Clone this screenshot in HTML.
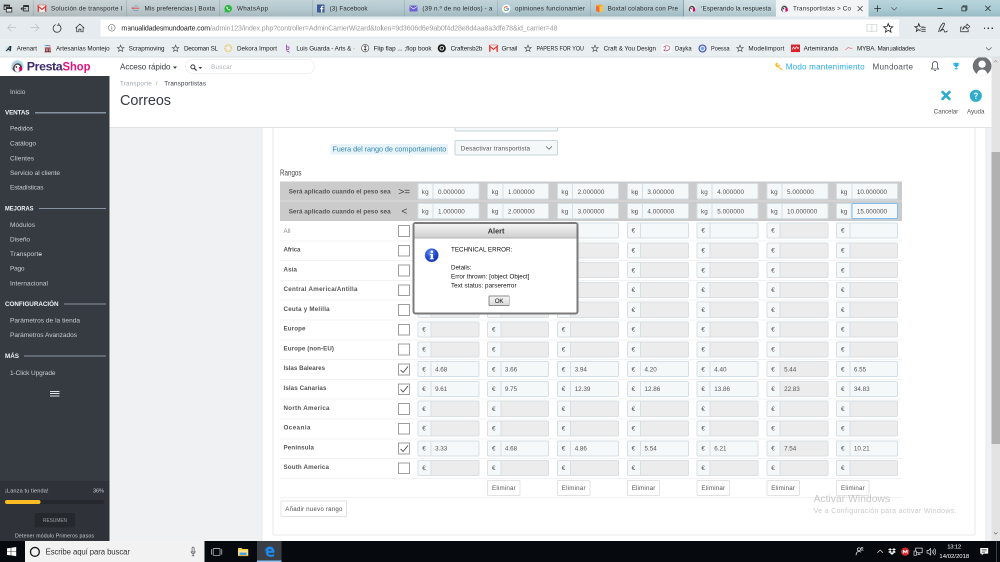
<!DOCTYPE html>
<html><head><meta charset="utf-8"><title>Transportistas</title>
<style>

.t{position:absolute;white-space:nowrap;font-family:"Liberation Sans",sans-serif;}
.a{position:absolute;}
svg{position:absolute;overflow:visible;}
.ig{position:absolute;height:32.2px;width:124px;box-sizing:border-box;border:2px solid #d4e0e5;border-radius:3.2px;background:#f5f8f9;}
.ig i{position:absolute;left:24.2px;top:0;bottom:0;width:2px;background:#d4e0e5;}
.ig.d{border-color:#d9dfe2}
.ig.d b{position:absolute;left:26.2px;top:0;bottom:0;right:0;background:#ececec;}
.ig.k i{left:28.2px}
.cb{position:absolute;left:796.4px;width:23.6px;height:23.6px;box-sizing:border-box;border:2px solid #9e9e9e;background:#fff;}
.rl{position:absolute;left:560px;width:1244px;height:2px;background:#f0f2f3;}
.btn{position:absolute;box-sizing:border-box;border:2px solid #e2e2e2;border-radius:3.2px;background:#fff;}
html,body{margin:0;padding:0;}
body{width:1000px;height:562px;overflow:hidden;position:relative;background:#eff1f2;font-family:"Liberation Sans",sans-serif;}
#w{position:absolute;left:0;top:0;width:2000px;height:1124px;transform:scale(0.5);transform-origin:0 0;will-change:transform;overflow:hidden;background:#eff1f2;}
</style></head>
<body>
<div id="w">
<div class="a" style="left:522.6px;top:240px;width:1450px;height:850px;background:#fff;border:2px solid #e6e9eb;box-sizing:border-box;"></div>
<div class="a" style="left:544.6px;top:240px;width:1406.4px;height:831px;background:#fff;border:2px solid #e6e9eb;box-sizing:border-box;border-radius:0 0 4px 4px;"></div>
<div class="a" style="left:909px;top:236px;width:207px;height:27px;border:2px solid #c5d5db;border-radius:3.2px;background:#f5f8f9;box-sizing:border-box;"></div>
<div class="a" style="left:909px;top:280px;width:207px;height:31.2px;border:2px solid #c5d5db;border-radius:3.2px;background:#f5f8f9;box-sizing:border-box;"></div>
<svg style="left:1091px;top:292px" width="14" height="8" viewBox="0 0 7 4"><path d="M0.5 0.4 L3.5 3.3 L6.5 0.4" fill="none" stroke="#555" stroke-width="0.7"/></svg>
<div class="a" style="left:849.2px;top:253.6px;width:2px;height:2.8px;background:#9aa;"></div>
<div class="a" style="left:661px;top:288px;width:235px;height:21px;background:#e8f3f9;border-radius:3px;"></div>
<div class="a" style="left:560px;top:363.4px;width:1244px;height:78.4px;background:#cbcbcb;"></div>
<div class="a" style="left:560px;top:401px;width:1244px;height:2px;background:#dadada;"></div>
<div class="ig k" style="left:834.8px;top:366.4px"><i></i></div>
<div class="ig k" style="left:974.4px;top:366.4px"><i></i></div>
<div class="ig k" style="left:1114px;top:366.4px"><i></i></div>
<div class="ig k" style="left:1253.6px;top:366.4px"><i></i></div>
<div class="ig k" style="left:1393.2px;top:366.4px"><i></i></div>
<div class="ig k" style="left:1532.8px;top:366.4px"><i></i></div>
<div class="ig k" style="left:1672.4px;top:366.4px"><i></i></div>
<div class="ig k" style="left:834.8px;top:405.6px"><i></i></div>
<div class="ig k" style="left:974.4px;top:405.6px"><i></i></div>
<div class="ig k" style="left:1114px;top:405.6px"><i></i></div>
<div class="ig k" style="left:1253.6px;top:405.6px"><i></i></div>
<div class="ig k" style="left:1393.2px;top:405.6px"><i></i></div>
<div class="ig k" style="left:1532.8px;top:405.6px"><i></i></div>
<div class="ig k" style="left:1672.4px;top:405.6px"><i></i><u style="position:absolute;left:28.2px;top:-2px;right:-2px;bottom:-2px;border:2px solid #86bbe8;border-radius:3.2px;box-shadow:0 0 4px #a9d3f3;"></u></div>
<div class="rl" style="top:480.72px"></div>
<div class="ig" style="left:834.8px;top:445.14px"><b></b><i></i></div>
<div class="ig" style="left:974.4px;top:445.14px"><b></b><i></i></div>
<div class="ig" style="left:1114px;top:445.14px"><b></b><i></i></div>
<div class="ig" style="left:1253.6px;top:445.14px"><b></b><i></i></div>
<div class="ig" style="left:1393.2px;top:445.14px"><b></b><i></i></div>
<div class="ig d" style="left:1532.8px;top:445.14px"><b></b><i></i></div>
<div class="ig" style="left:1672.4px;top:445.14px"><b></b><i></i></div>
<div class="cb" style="top:449.94px"></div>
<div class="rl" style="top:520.3px"></div>
<div class="ig d" style="left:834.8px;top:484.72px"><b></b><i></i></div>
<div class="ig d" style="left:974.4px;top:484.72px"><b></b><i></i></div>
<div class="ig d" style="left:1114px;top:484.72px"><b></b><i></i></div>
<div class="ig d" style="left:1253.6px;top:484.72px"><b></b><i></i></div>
<div class="ig d" style="left:1393.2px;top:484.72px"><b></b><i></i></div>
<div class="ig d" style="left:1532.8px;top:484.72px"><b></b><i></i></div>
<div class="ig d" style="left:1672.4px;top:484.72px"><b></b><i></i></div>
<div class="cb" style="top:489.52px"></div>
<div class="rl" style="top:559.88px"></div>
<div class="ig d" style="left:834.8px;top:524.3px"><b></b><i></i></div>
<div class="ig d" style="left:974.4px;top:524.3px"><b></b><i></i></div>
<div class="ig d" style="left:1114px;top:524.3px"><b></b><i></i></div>
<div class="ig d" style="left:1253.6px;top:524.3px"><b></b><i></i></div>
<div class="ig d" style="left:1393.2px;top:524.3px"><b></b><i></i></div>
<div class="ig d" style="left:1532.8px;top:524.3px"><b></b><i></i></div>
<div class="ig d" style="left:1672.4px;top:524.3px"><b></b><i></i></div>
<div class="cb" style="top:529.1px"></div>
<div class="rl" style="top:599.46px"></div>
<div class="ig d" style="left:834.8px;top:563.88px"><b></b><i></i></div>
<div class="ig d" style="left:974.4px;top:563.88px"><b></b><i></i></div>
<div class="ig d" style="left:1114px;top:563.88px"><b></b><i></i></div>
<div class="ig d" style="left:1253.6px;top:563.88px"><b></b><i></i></div>
<div class="ig d" style="left:1393.2px;top:563.88px"><b></b><i></i></div>
<div class="ig d" style="left:1532.8px;top:563.88px"><b></b><i></i></div>
<div class="ig d" style="left:1672.4px;top:563.88px"><b></b><i></i></div>
<div class="cb" style="top:568.68px"></div>
<div class="rl" style="top:639.04px"></div>
<div class="ig d" style="left:834.8px;top:603.46px"><b></b><i></i></div>
<div class="ig d" style="left:974.4px;top:603.46px"><b></b><i></i></div>
<div class="ig d" style="left:1114px;top:603.46px"><b></b><i></i></div>
<div class="ig d" style="left:1253.6px;top:603.46px"><b></b><i></i></div>
<div class="ig d" style="left:1393.2px;top:603.46px"><b></b><i></i></div>
<div class="ig d" style="left:1532.8px;top:603.46px"><b></b><i></i></div>
<div class="ig d" style="left:1672.4px;top:603.46px"><b></b><i></i></div>
<div class="cb" style="top:608.26px"></div>
<div class="rl" style="top:678.62px"></div>
<div class="ig d" style="left:834.8px;top:643.04px"><b></b><i></i></div>
<div class="ig d" style="left:974.4px;top:643.04px"><b></b><i></i></div>
<div class="ig d" style="left:1114px;top:643.04px"><b></b><i></i></div>
<div class="ig d" style="left:1253.6px;top:643.04px"><b></b><i></i></div>
<div class="ig d" style="left:1393.2px;top:643.04px"><b></b><i></i></div>
<div class="ig d" style="left:1532.8px;top:643.04px"><b></b><i></i></div>
<div class="ig d" style="left:1672.4px;top:643.04px"><b></b><i></i></div>
<div class="cb" style="top:647.84px"></div>
<div class="rl" style="top:718.2px"></div>
<div class="ig d" style="left:834.8px;top:682.62px"><b></b><i></i></div>
<div class="ig d" style="left:974.4px;top:682.62px"><b></b><i></i></div>
<div class="ig d" style="left:1114px;top:682.62px"><b></b><i></i></div>
<div class="ig d" style="left:1253.6px;top:682.62px"><b></b><i></i></div>
<div class="ig d" style="left:1393.2px;top:682.62px"><b></b><i></i></div>
<div class="ig d" style="left:1532.8px;top:682.62px"><b></b><i></i></div>
<div class="ig d" style="left:1672.4px;top:682.62px"><b></b><i></i></div>
<div class="cb" style="top:687.42px"></div>
<div class="rl" style="top:757.78px"></div>
<div class="ig" style="left:834.8px;top:722.2px"><b></b><i></i></div>
<div class="ig" style="left:974.4px;top:722.2px"><b></b><i></i></div>
<div class="ig" style="left:1114px;top:722.2px"><b></b><i></i></div>
<div class="ig" style="left:1253.6px;top:722.2px"><b></b><i></i></div>
<div class="ig" style="left:1393.2px;top:722.2px"><b></b><i></i></div>
<div class="ig d" style="left:1532.8px;top:722.2px"><b></b><i></i></div>
<div class="ig" style="left:1672.4px;top:722.2px"><b></b><i></i></div>
<div class="cb" style="top:727px"><svg style="left:1.2px;top:1.6px" width="17" height="16" viewBox="0 0 8.5 8"><path d="M0.6 4.4 L3.1 7 L8 1" fill="none" stroke="#444" stroke-width="0.9"/></svg></div>
<div class="rl" style="top:797.36px"></div>
<div class="ig" style="left:834.8px;top:761.78px"><b></b><i></i></div>
<div class="ig" style="left:974.4px;top:761.78px"><b></b><i></i></div>
<div class="ig" style="left:1114px;top:761.78px"><b></b><i></i></div>
<div class="ig" style="left:1253.6px;top:761.78px"><b></b><i></i></div>
<div class="ig" style="left:1393.2px;top:761.78px"><b></b><i></i></div>
<div class="ig d" style="left:1532.8px;top:761.78px"><b></b><i></i></div>
<div class="ig" style="left:1672.4px;top:761.78px"><b></b><i></i></div>
<div class="cb" style="top:766.58px"><svg style="left:1.2px;top:1.6px" width="17" height="16" viewBox="0 0 8.5 8"><path d="M0.6 4.4 L3.1 7 L8 1" fill="none" stroke="#444" stroke-width="0.9"/></svg></div>
<div class="rl" style="top:836.94px"></div>
<div class="ig d" style="left:834.8px;top:801.36px"><b></b><i></i></div>
<div class="ig d" style="left:974.4px;top:801.36px"><b></b><i></i></div>
<div class="ig d" style="left:1114px;top:801.36px"><b></b><i></i></div>
<div class="ig d" style="left:1253.6px;top:801.36px"><b></b><i></i></div>
<div class="ig d" style="left:1393.2px;top:801.36px"><b></b><i></i></div>
<div class="ig d" style="left:1532.8px;top:801.36px"><b></b><i></i></div>
<div class="ig d" style="left:1672.4px;top:801.36px"><b></b><i></i></div>
<div class="cb" style="top:806.16px"></div>
<div class="rl" style="top:876.52px"></div>
<div class="ig d" style="left:834.8px;top:840.94px"><b></b><i></i></div>
<div class="ig d" style="left:974.4px;top:840.94px"><b></b><i></i></div>
<div class="ig d" style="left:1114px;top:840.94px"><b></b><i></i></div>
<div class="ig d" style="left:1253.6px;top:840.94px"><b></b><i></i></div>
<div class="ig d" style="left:1393.2px;top:840.94px"><b></b><i></i></div>
<div class="ig d" style="left:1532.8px;top:840.94px"><b></b><i></i></div>
<div class="ig d" style="left:1672.4px;top:840.94px"><b></b><i></i></div>
<div class="cb" style="top:845.74px"></div>
<div class="rl" style="top:916.1px"></div>
<div class="ig" style="left:834.8px;top:880.52px"><b></b><i></i></div>
<div class="ig" style="left:974.4px;top:880.52px"><b></b><i></i></div>
<div class="ig" style="left:1114px;top:880.52px"><b></b><i></i></div>
<div class="ig" style="left:1253.6px;top:880.52px"><b></b><i></i></div>
<div class="ig" style="left:1393.2px;top:880.52px"><b></b><i></i></div>
<div class="ig d" style="left:1532.8px;top:880.52px"><b></b><i></i></div>
<div class="ig" style="left:1672.4px;top:880.52px"><b></b><i></i></div>
<div class="cb" style="top:885.32px"><svg style="left:1.2px;top:1.6px" width="17" height="16" viewBox="0 0 8.5 8"><path d="M0.6 4.4 L3.1 7 L8 1" fill="none" stroke="#444" stroke-width="0.9"/></svg></div>
<div class="rl" style="top:955.68px"></div>
<div class="ig d" style="left:834.8px;top:920.1px"><b></b><i></i></div>
<div class="ig d" style="left:974.4px;top:920.1px"><b></b><i></i></div>
<div class="ig d" style="left:1114px;top:920.1px"><b></b><i></i></div>
<div class="ig d" style="left:1253.6px;top:920.1px"><b></b><i></i></div>
<div class="ig d" style="left:1393.2px;top:920.1px"><b></b><i></i></div>
<div class="ig d" style="left:1532.8px;top:920.1px"><b></b><i></i></div>
<div class="ig d" style="left:1672.4px;top:920.1px"><b></b><i></i></div>
<div class="cb" style="top:924.9px"></div>
<div class="rl" style="top:994.4px"></div>
<div class="btn" style="left:974.4px;top:960px;width:66.8px;height:32px"></div>
<div class="btn" style="left:1114px;top:960px;width:66.8px;height:32px"></div>
<div class="btn" style="left:1253.6px;top:960px;width:66.8px;height:32px"></div>
<div class="btn" style="left:1393.2px;top:960px;width:66.8px;height:32px"></div>
<div class="btn" style="left:1532.8px;top:960px;width:66.8px;height:32px"></div>
<div class="btn" style="left:1672.4px;top:960px;width:66.8px;height:32px"></div>
<div class="btn" style="left:560.8px;top:1001px;width:132.8px;height:32.6px"></div>
<span class="t" style="left:664.8px;top:288.52px;font-size:14.6px;line-height:18.98px;color:#3586ae;letter-spacing:-0.13px;">Fuera del rango de comportamiento</span>
<span class="t" style="left:921.6px;top:288.9px;font-size:12.6px;line-height:16.38px;color:#555;letter-spacing:0.27px;">Desactivar transportista</span>
<span class="t" style="left:560px;top:336.16px;font-size:16px;line-height:20.8px;color:#444;transform:scaleX(0.7796);transform-origin:0 50%;">Rangos</span>
<span class="t" style="left:577.4px;top:375.3px;font-size:12.6px;line-height:16.38px;color:#555;font-weight:700;letter-spacing:0.07px;">Será aplicado cuando el peso sea</span>
<span class="t" style="left:577.4px;top:414.9px;font-size:12.6px;line-height:16.38px;color:#555;font-weight:700;letter-spacing:0.07px;">Será aplicado cuando el peso sea</span>
<span class="t" style="left:796.4px;top:368.84px;font-size:20.8px;line-height:27.04px;color:#444;letter-spacing:-0.3px;">&gt;=</span>
<span class="t" style="left:802.8px;top:408.44px;font-size:20.8px;line-height:27.04px;color:#444;">&lt;</span>
<span class="t" style="left:843.6px;top:376.1px;font-size:12.6px;line-height:16.38px;color:#555;letter-spacing:0.29px;">kg</span>
<span class="t" style="left:876px;top:375.5px;font-size:12.6px;line-height:16.38px;color:#555;letter-spacing:0.15px;">0.000000</span>
<span class="t" style="left:843.6px;top:415.1px;font-size:12.6px;line-height:16.38px;color:#555;letter-spacing:0.29px;">kg</span>
<span class="t" style="left:876px;top:414.5px;font-size:12.6px;line-height:16.38px;color:#555;letter-spacing:0.15px;">1.000000</span>
<span class="t" style="left:983.2px;top:376.1px;font-size:12.6px;line-height:16.38px;color:#555;letter-spacing:0.29px;">kg</span>
<span class="t" style="left:1015.6px;top:375.5px;font-size:12.6px;line-height:16.38px;color:#555;letter-spacing:0.15px;">1.000000</span>
<span class="t" style="left:983.2px;top:415.1px;font-size:12.6px;line-height:16.38px;color:#555;letter-spacing:0.29px;">kg</span>
<span class="t" style="left:1015.6px;top:414.5px;font-size:12.6px;line-height:16.38px;color:#555;letter-spacing:0.15px;">2.000000</span>
<span class="t" style="left:1122.8px;top:376.1px;font-size:12.6px;line-height:16.38px;color:#555;letter-spacing:0.29px;">kg</span>
<span class="t" style="left:1155.2px;top:375.5px;font-size:12.6px;line-height:16.38px;color:#555;letter-spacing:0.15px;">2.000000</span>
<span class="t" style="left:1122.8px;top:415.1px;font-size:12.6px;line-height:16.38px;color:#555;letter-spacing:0.29px;">kg</span>
<span class="t" style="left:1155.2px;top:414.5px;font-size:12.6px;line-height:16.38px;color:#555;letter-spacing:0.15px;">3.000000</span>
<span class="t" style="left:1262.4px;top:376.1px;font-size:12.6px;line-height:16.38px;color:#555;letter-spacing:0.29px;">kg</span>
<span class="t" style="left:1294.8px;top:375.5px;font-size:12.6px;line-height:16.38px;color:#555;letter-spacing:0.15px;">3.000000</span>
<span class="t" style="left:1262.4px;top:415.1px;font-size:12.6px;line-height:16.38px;color:#555;letter-spacing:0.29px;">kg</span>
<span class="t" style="left:1294.8px;top:414.5px;font-size:12.6px;line-height:16.38px;color:#555;letter-spacing:0.15px;">4.000000</span>
<span class="t" style="left:1402px;top:376.1px;font-size:12.6px;line-height:16.38px;color:#555;letter-spacing:0.29px;">kg</span>
<span class="t" style="left:1434.4px;top:375.5px;font-size:12.6px;line-height:16.38px;color:#555;letter-spacing:0.15px;">4.000000</span>
<span class="t" style="left:1402px;top:415.1px;font-size:12.6px;line-height:16.38px;color:#555;letter-spacing:0.29px;">kg</span>
<span class="t" style="left:1434.4px;top:414.5px;font-size:12.6px;line-height:16.38px;color:#555;letter-spacing:0.15px;">5.000000</span>
<span class="t" style="left:1541.6px;top:376.1px;font-size:12.6px;line-height:16.38px;color:#555;letter-spacing:0.29px;">kg</span>
<span class="t" style="left:1574px;top:375.5px;font-size:12.6px;line-height:16.38px;color:#555;letter-spacing:0.15px;">5.000000</span>
<span class="t" style="left:1541.6px;top:415.1px;font-size:12.6px;line-height:16.38px;color:#555;letter-spacing:0.29px;">kg</span>
<span class="t" style="left:1574px;top:414.5px;font-size:12.6px;line-height:16.38px;color:#555;letter-spacing:0.11px;">10.000000</span>
<span class="t" style="left:1681.2px;top:376.1px;font-size:12.6px;line-height:16.38px;color:#555;letter-spacing:0.29px;">kg</span>
<span class="t" style="left:1713.6px;top:375.5px;font-size:12.6px;line-height:16.38px;color:#555;letter-spacing:0.11px;">10.000000</span>
<span class="t" style="left:1681.2px;top:415.1px;font-size:12.6px;line-height:16.38px;color:#555;letter-spacing:0.29px;">kg</span>
<span class="t" style="left:1713.6px;top:414.5px;font-size:12.6px;line-height:16.38px;color:#555;letter-spacing:0.11px;">15.000000</span>
<span class="t" style="left:567px;top:454.18px;font-size:12.4px;line-height:16.12px;color:#8c8c8c;letter-spacing:0.11px;">All</span>
<span class="t" style="left:844.4px;top:453.44px;font-size:12.6px;line-height:16.38px;color:#555;letter-spacing:0.58px;">€</span>
<span class="t" style="left:984px;top:453.44px;font-size:12.6px;line-height:16.38px;color:#555;letter-spacing:0.58px;">€</span>
<span class="t" style="left:1123.6px;top:453.44px;font-size:12.6px;line-height:16.38px;color:#555;letter-spacing:0.58px;">€</span>
<span class="t" style="left:1263.2px;top:453.44px;font-size:12.6px;line-height:16.38px;color:#555;letter-spacing:0.58px;">€</span>
<span class="t" style="left:1402.8px;top:453.44px;font-size:12.6px;line-height:16.38px;color:#555;letter-spacing:0.58px;">€</span>
<span class="t" style="left:1542.4px;top:453.44px;font-size:12.6px;line-height:16.38px;color:#555;letter-spacing:0.58px;">€</span>
<span class="t" style="left:1682px;top:453.44px;font-size:12.6px;line-height:16.38px;color:#555;letter-spacing:0.58px;">€</span>
<span class="t" style="left:567px;top:490.96px;font-size:12.4px;line-height:16.12px;color:#555;font-weight:700;letter-spacing:-0.23px;">Africa</span>
<span class="t" style="left:844.4px;top:493.02px;font-size:12.6px;line-height:16.38px;color:#555;letter-spacing:0.58px;">€</span>
<span class="t" style="left:984px;top:493.02px;font-size:12.6px;line-height:16.38px;color:#555;letter-spacing:0.58px;">€</span>
<span class="t" style="left:1123.6px;top:493.02px;font-size:12.6px;line-height:16.38px;color:#555;letter-spacing:0.58px;">€</span>
<span class="t" style="left:1263.2px;top:493.02px;font-size:12.6px;line-height:16.38px;color:#555;letter-spacing:0.58px;">€</span>
<span class="t" style="left:1402.8px;top:493.02px;font-size:12.6px;line-height:16.38px;color:#555;letter-spacing:0.58px;">€</span>
<span class="t" style="left:1542.4px;top:493.02px;font-size:12.6px;line-height:16.38px;color:#555;letter-spacing:0.58px;">€</span>
<span class="t" style="left:1682px;top:493.02px;font-size:12.6px;line-height:16.38px;color:#555;letter-spacing:0.58px;">€</span>
<span class="t" style="left:567px;top:530.54px;font-size:12.4px;line-height:16.12px;color:#555;font-weight:700;letter-spacing:0.27px;">Asia</span>
<span class="t" style="left:844.4px;top:532.6px;font-size:12.6px;line-height:16.38px;color:#555;letter-spacing:0.58px;">€</span>
<span class="t" style="left:984px;top:532.6px;font-size:12.6px;line-height:16.38px;color:#555;letter-spacing:0.58px;">€</span>
<span class="t" style="left:1123.6px;top:532.6px;font-size:12.6px;line-height:16.38px;color:#555;letter-spacing:0.58px;">€</span>
<span class="t" style="left:1263.2px;top:532.6px;font-size:12.6px;line-height:16.38px;color:#555;letter-spacing:0.58px;">€</span>
<span class="t" style="left:1402.8px;top:532.6px;font-size:12.6px;line-height:16.38px;color:#555;letter-spacing:0.58px;">€</span>
<span class="t" style="left:1542.4px;top:532.6px;font-size:12.6px;line-height:16.38px;color:#555;letter-spacing:0.58px;">€</span>
<span class="t" style="left:1682px;top:532.6px;font-size:12.6px;line-height:16.38px;color:#555;letter-spacing:0.58px;">€</span>
<span class="t" style="left:567px;top:570.12px;font-size:12.4px;line-height:16.12px;color:#555;font-weight:700;letter-spacing:0.55px;">Central America/Antilla</span>
<span class="t" style="left:844.4px;top:572.18px;font-size:12.6px;line-height:16.38px;color:#555;letter-spacing:0.58px;">€</span>
<span class="t" style="left:984px;top:572.18px;font-size:12.6px;line-height:16.38px;color:#555;letter-spacing:0.58px;">€</span>
<span class="t" style="left:1123.6px;top:572.18px;font-size:12.6px;line-height:16.38px;color:#555;letter-spacing:0.58px;">€</span>
<span class="t" style="left:1263.2px;top:572.18px;font-size:12.6px;line-height:16.38px;color:#555;letter-spacing:0.58px;">€</span>
<span class="t" style="left:1402.8px;top:572.18px;font-size:12.6px;line-height:16.38px;color:#555;letter-spacing:0.58px;">€</span>
<span class="t" style="left:1542.4px;top:572.18px;font-size:12.6px;line-height:16.38px;color:#555;letter-spacing:0.58px;">€</span>
<span class="t" style="left:1682px;top:572.18px;font-size:12.6px;line-height:16.38px;color:#555;letter-spacing:0.58px;">€</span>
<span class="t" style="left:567px;top:609.7px;font-size:12.4px;line-height:16.12px;color:#555;font-weight:700;letter-spacing:0.44px;">Ceuta y Melilla</span>
<span class="t" style="left:844.4px;top:611.76px;font-size:12.6px;line-height:16.38px;color:#555;letter-spacing:0.58px;">€</span>
<span class="t" style="left:984px;top:611.76px;font-size:12.6px;line-height:16.38px;color:#555;letter-spacing:0.58px;">€</span>
<span class="t" style="left:1123.6px;top:611.76px;font-size:12.6px;line-height:16.38px;color:#555;letter-spacing:0.58px;">€</span>
<span class="t" style="left:1263.2px;top:611.76px;font-size:12.6px;line-height:16.38px;color:#555;letter-spacing:0.58px;">€</span>
<span class="t" style="left:1402.8px;top:611.76px;font-size:12.6px;line-height:16.38px;color:#555;letter-spacing:0.58px;">€</span>
<span class="t" style="left:1542.4px;top:611.76px;font-size:12.6px;line-height:16.38px;color:#555;letter-spacing:0.58px;">€</span>
<span class="t" style="left:1682px;top:611.76px;font-size:12.6px;line-height:16.38px;color:#555;letter-spacing:0.58px;">€</span>
<span class="t" style="left:567px;top:649.28px;font-size:12.4px;line-height:16.12px;color:#555;font-weight:700;letter-spacing:0.26px;">Europe</span>
<span class="t" style="left:844.4px;top:651.34px;font-size:12.6px;line-height:16.38px;color:#555;letter-spacing:0.58px;">€</span>
<span class="t" style="left:984px;top:651.34px;font-size:12.6px;line-height:16.38px;color:#555;letter-spacing:0.58px;">€</span>
<span class="t" style="left:1123.6px;top:651.34px;font-size:12.6px;line-height:16.38px;color:#555;letter-spacing:0.58px;">€</span>
<span class="t" style="left:1263.2px;top:651.34px;font-size:12.6px;line-height:16.38px;color:#555;letter-spacing:0.58px;">€</span>
<span class="t" style="left:1402.8px;top:651.34px;font-size:12.6px;line-height:16.38px;color:#555;letter-spacing:0.58px;">€</span>
<span class="t" style="left:1542.4px;top:651.34px;font-size:12.6px;line-height:16.38px;color:#555;letter-spacing:0.58px;">€</span>
<span class="t" style="left:1682px;top:651.34px;font-size:12.6px;line-height:16.38px;color:#555;letter-spacing:0.58px;">€</span>
<span class="t" style="left:567px;top:688.86px;font-size:12.4px;line-height:16.12px;color:#555;font-weight:700;letter-spacing:0.18px;">Europe (non-EU)</span>
<span class="t" style="left:844.4px;top:690.92px;font-size:12.6px;line-height:16.38px;color:#555;letter-spacing:0.58px;">€</span>
<span class="t" style="left:984px;top:690.92px;font-size:12.6px;line-height:16.38px;color:#555;letter-spacing:0.58px;">€</span>
<span class="t" style="left:1123.6px;top:690.92px;font-size:12.6px;line-height:16.38px;color:#555;letter-spacing:0.58px;">€</span>
<span class="t" style="left:1263.2px;top:690.92px;font-size:12.6px;line-height:16.38px;color:#555;letter-spacing:0.58px;">€</span>
<span class="t" style="left:1402.8px;top:690.92px;font-size:12.6px;line-height:16.38px;color:#555;letter-spacing:0.58px;">€</span>
<span class="t" style="left:1542.4px;top:690.92px;font-size:12.6px;line-height:16.38px;color:#555;letter-spacing:0.58px;">€</span>
<span class="t" style="left:1682px;top:690.92px;font-size:12.6px;line-height:16.38px;color:#555;letter-spacing:0.58px;">€</span>
<span class="t" style="left:567px;top:728.44px;font-size:12.4px;line-height:16.12px;color:#555;font-weight:700;letter-spacing:0.03px;">Islas Baleares</span>
<span class="t" style="left:844.4px;top:730.5px;font-size:12.6px;line-height:16.38px;color:#555;letter-spacing:0.58px;">€</span>
<span class="t" style="left:870.2px;top:730.5px;font-size:12.6px;line-height:16.38px;color:#555;letter-spacing:-0.04px;">4.68</span>
<span class="t" style="left:984px;top:730.5px;font-size:12.6px;line-height:16.38px;color:#555;letter-spacing:0.58px;">€</span>
<span class="t" style="left:1009.8px;top:730.5px;font-size:12.6px;line-height:16.38px;color:#555;letter-spacing:-0.04px;">3.66</span>
<span class="t" style="left:1123.6px;top:730.5px;font-size:12.6px;line-height:16.38px;color:#555;letter-spacing:0.58px;">€</span>
<span class="t" style="left:1149.4px;top:730.5px;font-size:12.6px;line-height:16.38px;color:#555;letter-spacing:-0.04px;">3.94</span>
<span class="t" style="left:1263.2px;top:730.5px;font-size:12.6px;line-height:16.38px;color:#555;letter-spacing:0.58px;">€</span>
<span class="t" style="left:1289px;top:730.5px;font-size:12.6px;line-height:16.38px;color:#555;letter-spacing:-0.04px;">4.20</span>
<span class="t" style="left:1402.8px;top:730.5px;font-size:12.6px;line-height:16.38px;color:#555;letter-spacing:0.58px;">€</span>
<span class="t" style="left:1428.6px;top:730.5px;font-size:12.6px;line-height:16.38px;color:#555;letter-spacing:-0.04px;">4.40</span>
<span class="t" style="left:1542.4px;top:730.5px;font-size:12.6px;line-height:16.38px;color:#555;letter-spacing:0.58px;">€</span>
<span class="t" style="left:1568.2px;top:730.5px;font-size:12.6px;line-height:16.38px;color:#555;letter-spacing:-0.04px;">5.44</span>
<span class="t" style="left:1682px;top:730.5px;font-size:12.6px;line-height:16.38px;color:#555;letter-spacing:0.58px;">€</span>
<span class="t" style="left:1707.8px;top:730.5px;font-size:12.6px;line-height:16.38px;color:#555;letter-spacing:-0.04px;">6.55</span>
<span class="t" style="left:567px;top:768.02px;font-size:12.4px;line-height:16.12px;color:#555;font-weight:700;letter-spacing:0.19px;">Islas Canarias</span>
<span class="t" style="left:844.4px;top:770.08px;font-size:12.6px;line-height:16.38px;color:#555;letter-spacing:0.58px;">€</span>
<span class="t" style="left:870.2px;top:770.08px;font-size:12.6px;line-height:16.38px;color:#555;letter-spacing:-0.04px;">9.61</span>
<span class="t" style="left:984px;top:770.08px;font-size:12.6px;line-height:16.38px;color:#555;letter-spacing:0.58px;">€</span>
<span class="t" style="left:1009.8px;top:770.08px;font-size:12.6px;line-height:16.38px;color:#555;letter-spacing:-0.04px;">9.75</span>
<span class="t" style="left:1123.6px;top:770.08px;font-size:12.6px;line-height:16.38px;color:#555;letter-spacing:0.58px;">€</span>
<span class="t" style="left:1149.4px;top:770.08px;font-size:12.6px;line-height:16.38px;color:#555;letter-spacing:-0.03px;">12.39</span>
<span class="t" style="left:1263.2px;top:770.08px;font-size:12.6px;line-height:16.38px;color:#555;letter-spacing:0.58px;">€</span>
<span class="t" style="left:1289px;top:770.08px;font-size:12.6px;line-height:16.38px;color:#555;letter-spacing:-0.03px;">12.86</span>
<span class="t" style="left:1402.8px;top:770.08px;font-size:12.6px;line-height:16.38px;color:#555;letter-spacing:0.58px;">€</span>
<span class="t" style="left:1428.6px;top:770.08px;font-size:12.6px;line-height:16.38px;color:#555;letter-spacing:-0.03px;">13.86</span>
<span class="t" style="left:1542.4px;top:770.08px;font-size:12.6px;line-height:16.38px;color:#555;letter-spacing:0.58px;">€</span>
<span class="t" style="left:1568.2px;top:770.08px;font-size:12.6px;line-height:16.38px;color:#555;letter-spacing:-0.03px;">22.83</span>
<span class="t" style="left:1682px;top:770.08px;font-size:12.6px;line-height:16.38px;color:#555;letter-spacing:0.58px;">€</span>
<span class="t" style="left:1707.8px;top:770.08px;font-size:12.6px;line-height:16.38px;color:#555;letter-spacing:-0.03px;">34.83</span>
<span class="t" style="left:567px;top:807.6px;font-size:12.4px;line-height:16.12px;color:#555;font-weight:700;letter-spacing:0.59px;">North America</span>
<span class="t" style="left:844.4px;top:809.66px;font-size:12.6px;line-height:16.38px;color:#555;letter-spacing:0.58px;">€</span>
<span class="t" style="left:984px;top:809.66px;font-size:12.6px;line-height:16.38px;color:#555;letter-spacing:0.58px;">€</span>
<span class="t" style="left:1123.6px;top:809.66px;font-size:12.6px;line-height:16.38px;color:#555;letter-spacing:0.58px;">€</span>
<span class="t" style="left:1263.2px;top:809.66px;font-size:12.6px;line-height:16.38px;color:#555;letter-spacing:0.58px;">€</span>
<span class="t" style="left:1402.8px;top:809.66px;font-size:12.6px;line-height:16.38px;color:#555;letter-spacing:0.58px;">€</span>
<span class="t" style="left:1542.4px;top:809.66px;font-size:12.6px;line-height:16.38px;color:#555;letter-spacing:0.58px;">€</span>
<span class="t" style="left:1682px;top:809.66px;font-size:12.6px;line-height:16.38px;color:#555;letter-spacing:0.58px;">€</span>
<span class="t" style="left:567px;top:847.18px;font-size:12.4px;line-height:16.12px;color:#555;font-weight:700;letter-spacing:0.96px;">Oceania</span>
<span class="t" style="left:844.4px;top:849.24px;font-size:12.6px;line-height:16.38px;color:#555;letter-spacing:0.58px;">€</span>
<span class="t" style="left:984px;top:849.24px;font-size:12.6px;line-height:16.38px;color:#555;letter-spacing:0.58px;">€</span>
<span class="t" style="left:1123.6px;top:849.24px;font-size:12.6px;line-height:16.38px;color:#555;letter-spacing:0.58px;">€</span>
<span class="t" style="left:1263.2px;top:849.24px;font-size:12.6px;line-height:16.38px;color:#555;letter-spacing:0.58px;">€</span>
<span class="t" style="left:1402.8px;top:849.24px;font-size:12.6px;line-height:16.38px;color:#555;letter-spacing:0.58px;">€</span>
<span class="t" style="left:1542.4px;top:849.24px;font-size:12.6px;line-height:16.38px;color:#555;letter-spacing:0.58px;">€</span>
<span class="t" style="left:1682px;top:849.24px;font-size:12.6px;line-height:16.38px;color:#555;letter-spacing:0.58px;">€</span>
<span class="t" style="left:567px;top:886.76px;font-size:12.4px;line-height:16.12px;color:#555;font-weight:700;letter-spacing:0.31px;">Península</span>
<span class="t" style="left:844.4px;top:888.82px;font-size:12.6px;line-height:16.38px;color:#555;letter-spacing:0.58px;">€</span>
<span class="t" style="left:870.2px;top:888.82px;font-size:12.6px;line-height:16.38px;color:#555;letter-spacing:-0.04px;">3.33</span>
<span class="t" style="left:984px;top:888.82px;font-size:12.6px;line-height:16.38px;color:#555;letter-spacing:0.58px;">€</span>
<span class="t" style="left:1009.8px;top:888.82px;font-size:12.6px;line-height:16.38px;color:#555;letter-spacing:-0.04px;">4.68</span>
<span class="t" style="left:1123.6px;top:888.82px;font-size:12.6px;line-height:16.38px;color:#555;letter-spacing:0.58px;">€</span>
<span class="t" style="left:1149.4px;top:888.82px;font-size:12.6px;line-height:16.38px;color:#555;letter-spacing:-0.04px;">4.86</span>
<span class="t" style="left:1263.2px;top:888.82px;font-size:12.6px;line-height:16.38px;color:#555;letter-spacing:0.58px;">€</span>
<span class="t" style="left:1289px;top:888.82px;font-size:12.6px;line-height:16.38px;color:#555;letter-spacing:-0.04px;">5.54</span>
<span class="t" style="left:1402.8px;top:888.82px;font-size:12.6px;line-height:16.38px;color:#555;letter-spacing:0.58px;">€</span>
<span class="t" style="left:1428.6px;top:888.82px;font-size:12.6px;line-height:16.38px;color:#555;letter-spacing:-0.04px;">6.21</span>
<span class="t" style="left:1542.4px;top:888.82px;font-size:12.6px;line-height:16.38px;color:#555;letter-spacing:0.58px;">€</span>
<span class="t" style="left:1568.2px;top:888.82px;font-size:12.6px;line-height:16.38px;color:#555;letter-spacing:-0.04px;">7.54</span>
<span class="t" style="left:1682px;top:888.82px;font-size:12.6px;line-height:16.38px;color:#555;letter-spacing:0.58px;">€</span>
<span class="t" style="left:1707.8px;top:888.82px;font-size:12.6px;line-height:16.38px;color:#555;letter-spacing:-0.03px;">10.21</span>
<span class="t" style="left:567px;top:926.34px;font-size:12.4px;line-height:16.12px;color:#555;font-weight:700;letter-spacing:0.33px;">South America</span>
<span class="t" style="left:844.4px;top:928.4px;font-size:12.6px;line-height:16.38px;color:#555;letter-spacing:0.58px;">€</span>
<span class="t" style="left:984px;top:928.4px;font-size:12.6px;line-height:16.38px;color:#555;letter-spacing:0.58px;">€</span>
<span class="t" style="left:1123.6px;top:928.4px;font-size:12.6px;line-height:16.38px;color:#555;letter-spacing:0.58px;">€</span>
<span class="t" style="left:1263.2px;top:928.4px;font-size:12.6px;line-height:16.38px;color:#555;letter-spacing:0.58px;">€</span>
<span class="t" style="left:1402.8px;top:928.4px;font-size:12.6px;line-height:16.38px;color:#555;letter-spacing:0.58px;">€</span>
<span class="t" style="left:1542.4px;top:928.4px;font-size:12.6px;line-height:16.38px;color:#555;letter-spacing:0.58px;">€</span>
<span class="t" style="left:1682px;top:928.4px;font-size:12.6px;line-height:16.38px;color:#555;letter-spacing:0.58px;">€</span>
<span class="t" style="left:984px;top:968.24px;font-size:12.4px;line-height:16.12px;color:#555;letter-spacing:0.38px;">Eliminar</span>
<span class="t" style="left:1123.6px;top:968.24px;font-size:12.4px;line-height:16.12px;color:#555;letter-spacing:0.38px;">Eliminar</span>
<span class="t" style="left:1263.2px;top:968.24px;font-size:12.4px;line-height:16.12px;color:#555;letter-spacing:0.38px;">Eliminar</span>
<span class="t" style="left:1402.8px;top:968.24px;font-size:12.4px;line-height:16.12px;color:#555;letter-spacing:0.38px;">Eliminar</span>
<span class="t" style="left:1542.4px;top:968.24px;font-size:12.4px;line-height:16.12px;color:#555;letter-spacing:0.38px;">Eliminar</span>
<span class="t" style="left:1682px;top:968.24px;font-size:12.4px;line-height:16.12px;color:#555;letter-spacing:0.38px;">Eliminar</span>
<span class="t" style="left:570.6px;top:1009.84px;font-size:12.4px;line-height:16.12px;color:#555;letter-spacing:0.36px;">Añadir nuevo rango</span>
<div class="a" style="left:825.4px;top:444px;width:331.2px;height:184.8px;box-sizing:border-box;border:4.4px solid #7b7b7b;border-radius:6px;background:#fff;"></div>
<div class="a" style="left:829.4px;top:448px;width:323.2px;height:29.2px;background:linear-gradient(#f4f4f4,#cfcfcf);border-bottom:2px solid #b5b5b5;box-sizing:border-box;"></div>
<svg style="left:849.4px;top:496px" width="28.8" height="28.8" viewBox="0 0 32 32">
<defs><radialGradient id="ig1" cx="40%" cy="30%" r="75%"><stop offset="0" stop-color="#5e8df5"/><stop offset="0.6" stop-color="#1e46d2"/><stop offset="1" stop-color="#0f2aa8"/></radialGradient></defs>
<circle cx="16" cy="16" r="15" fill="url(#ig1)" stroke="#7a8fd0" stroke-width="1"/>
<circle cx="16.3" cy="8.2" r="2.8" fill="#fff"/>
<path d="M11.5 13 H18.8 V23 H21 V25.3 H11.5 V23 H13.8 V15.3 H11.5 Z" fill="#fff"/></svg>
<div class="a" style="left:976.6px;top:591.4px;width:42.4px;height:20.4px;box-sizing:border-box;border:2px solid #8b8b8b;border-radius:2px;background:linear-gradient(#f6f6f6,#d9d9d9);"></div>
<span class="t" style="left:975.6px;top:453.12px;font-size:14.6px;line-height:18.98px;color:#333;font-weight:700;letter-spacing:-0.01px;">Alert</span>
<span class="t" style="left:902px;top:491.18px;font-size:12.5px;line-height:16.24px;color:#111;letter-spacing:-0px;">TECHNICAL ERROR:</span>
<span class="t" style="left:902px;top:527.38px;font-size:12.5px;line-height:16.24px;color:#111;letter-spacing:-0.1px;">Details:</span>
<span class="t" style="left:902px;top:545.18px;font-size:12.5px;line-height:16.24px;color:#111;letter-spacing:0.04px;">Error thrown: [object Object]</span>
<span class="t" style="left:902px;top:562.78px;font-size:12.5px;line-height:16.24px;color:#111;letter-spacing:0.11px;">Text status: parsererror</span>
<span class="t" style="left:989.6px;top:593.78px;font-size:12.5px;line-height:16.24px;color:#111;letter-spacing:-0.46px;">OK</span>
<div class="a" style="left:218.6px;top:152px;width:1765px;height:103.4px;background:#fff;border-bottom:1.4px solid #dfe3e6;box-sizing:border-box;"></div>
<svg style="left:1882.4px;top:181px" width="20" height="20" viewBox="0 0 10 10"><path d="M1.6 1.6 L8.4 8.4 M8.4 1.6 L1.6 8.4" stroke="#2eacce" stroke-width="2.7" stroke-linecap="round" fill="none"/></svg>
<svg style="left:1939px;top:178.6px" width="25.2" height="25.2" viewBox="0 0 24 24"><circle cx="12" cy="12" r="11.5" fill="#2eacce"/><path d="M8.3 9.4 C8.3 6.8 10 5.6 12.1 5.6 C14.3 5.6 15.9 6.9 15.9 8.9 C15.9 11.5 13 11.6 13 14.2 L10.9 14.2 C10.9 11 13.6 10.8 13.6 9.1 C13.6 8.2 13 7.6 12.1 7.6 C11.1 7.6 10.5 8.3 10.5 9.4 Z M10.7 15.8 H13.2 V18.3 H10.7 Z" fill="#fff"/></svg>
<div class="a" style="left:0;top:152px;width:218.6px;height:932px;background:#363a41;"></div>
<div class="a" style="left:0;top:962px;width:218.6px;height:122px;background:#2f3339;"></div>
<div class="a" style="left:70px;top:224.4px;width:142px;height:2.2px;background:#8793a0;"></div>
<div class="a" style="left:78px;top:415.8px;width:134px;height:2.2px;background:#8793a0;"></div>
<div class="a" style="left:128px;top:607px;width:84px;height:2.2px;background:#8793a0;"></div>
<div class="a" style="left:48px;top:710.6px;width:164px;height:2.2px;background:#8793a0;"></div>
<div class="a" style="left:100px;top:782px;width:19px;height:2px;background:#dfe3e6;"></div>
<div class="a" style="left:100px;top:786.4px;width:19px;height:2px;background:#dfe3e6;"></div>
<div class="a" style="left:100px;top:790.8px;width:19px;height:2px;background:#dfe3e6;"></div>
<div class="a" style="left:10px;top:1000px;width:198px;height:8px;border-radius:4px;background:#25282d;"></div>
<div class="a" style="left:10px;top:1000px;width:71px;height:8px;border-radius:4px;background:#fbbb22;"></div>
<div class="a" style="left:69px;top:1026px;width:81px;height:28.6px;border-radius:3px;background:#25282d;"></div>
<div class="a" style="left:0;top:114.6px;width:1983.4px;height:37.4px;background:#fff;"></div>
<div class="a" style="left:370px;top:118px;width:260px;height:30px;border:2px solid #eef0f1;border-radius:15px;box-sizing:border-box;background:#fff;"></div>
<svg style="left:380px;top:128px" width="14" height="14" viewBox="0 0 14 14"><circle cx="5.7" cy="5.7" r="4" fill="none" stroke="#363a41" stroke-width="1.9"/><path d="M8.6 8.6 L12.6 12.6" stroke="#363a41" stroke-width="2.2" stroke-linecap="round"/></svg>
<svg style="left:397px;top:133.6px" width="7.2" height="4.4" viewBox="0 0 10 6"><path d="M0 0 H10 L5 6 Z" fill="#363a41"/></svg>
<svg style="left:345.6px;top:133.2px" width="8" height="4.8" viewBox="0 0 10 6"><path d="M0 0 H10 L5 6 Z" fill="#363a41"/></svg>
<svg style="left:22.4px;top:120px" width="25.6" height="25.6" viewBox="0 0 32 32"><circle cx="16" cy="16" r="15.5" fill="#a5dbe8"/>
<path d="M4 22 C6 12 12 8 17 8 C23 8 27 13 28 20 C27 27 20 31 14 30 C8 29 5 26 4 22Z" fill="#4a3f45"/>
<path d="M9 21 C9 15 12 12 16 12 C20 12 23 15 23 21 C23 27 19 30 16 30 C12 30 9 26 9 21Z" fill="#fff"/>
<path d="M20 18 L27 16 L28 26 L21 28 Z" fill="#df0067"/>
<circle cx="13.5" cy="17.5" r="2.2" fill="#34262a"/><path d="M15 22 L19 21.5 L17 24.5 Z" fill="#f9b233"/>
<path d="M3 15 C6 6 14 2 22 5 C16 5 9 8 6 17 Z" fill="#c3c7c9"/></svg>
<svg style="left:1550px;top:125.2px" width="16" height="16" viewBox="0 0 16 16"><path d="M1 3.6 C1.2 1.4 3.6 0 6 1 L3.8 3.2 L4.4 5.6 L6.8 6.2 L9 4 C10 6.400 8.600 8.800 6.400 9 L14.600 13.200 C15.400 14 14.600 15.600 13.400 15 L5.800 9.200 C3 9.600 0.800 6.800 1 3.600Z" fill="#fbbb22" stroke="#fbbb22" stroke-width="0.8" stroke-linejoin="round"/></svg>
<svg style="left:1861.2px;top:121px" width="18" height="22" viewBox="0 0 18 22"><path d="M9 2.2 C5.6 2.2 3.8 5 3.8 8.6 V14 L1.6 17 H16.4 L14.2 14 V8.6 C14.2 5 12.4 2.2 9 2.2Z" fill="none" stroke="#4a4f57" stroke-width="1.7" stroke-linejoin="round"/><path d="M6.8 19 a2.2 2 0 0 0 4.4 0Z" fill="#4a4f57"/></svg>
<svg style="left:1906px;top:124.6px" width="12.8" height="14.8" viewBox="0 0 16 18"><path d="M3.5 0.5 H12.5 V6 C12.5 9 10.5 11 8 11 C5.500 11 3.5 9 3.5 6Z" fill="#27acea"/><path d="M3.5 2 H0.8 C0.8 6 2 7.6 4.6 8 M12.5 2 H15.2 C15.2 6 14 7.6 11.4 8" fill="none" stroke="#27acea" stroke-width="1.4"/><rect x="7" y="10.5" width="2" height="4" fill="#27acea"/><rect x="4" y="14.3" width="8" height="2.6" fill="#27acea"/></svg>
<svg style="left:1944.8px;top:112.8px" width="38.4" height="38.4" viewBox="0 0 40 40"><defs><clipPath id="av"><circle cx="20" cy="20" r="19.5"/></clipPath></defs><circle cx="20" cy="20" r="19.5" fill="#6f7275"/><g clip-path="url(#av)" fill="#fff"><circle cx="20" cy="16" r="7.6"/><path d="M8.500 42 C8.500 31 14 27 20 27 C26 27 31.500 31 31.500 42Z"/></g></svg>
<div class="a" style="left:1983.4px;top:114.6px;width:16.6px;height:968px;background:#e3e3e3;"></div>
<div class="a" style="left:1983.4px;top:304px;width:16.6px;height:584px;background:#b1b1b1;"></div>
<svg style="left:1986.8px;top:120.4px" width="8.8" height="5.2" viewBox="0 0 8 5"><path d="M0.5 4.5 L4 1 L7.5 4.5" fill="none" stroke="#8a8a8a" stroke-width="1"/></svg>
<svg style="left:1987.2px;top:1064px" width="8.8" height="5.2" viewBox="0 0 8 5"><path d="M0.5 0.5 L4 4 L7.500 0.5" fill="none" stroke="#555" stroke-width="1"/></svg>
<div class="a" style="left:0;top:0;width:2000px;height:33.2px;background:linear-gradient(90deg,#bec7ca 0%,#b8c6ca 14%,#b0c6cd 30%,#adc7cf 70%,#a6c8d1 88%,#a4c9d2 100%);"></div>
<div class="a" style="left:0;top:0;width:2000px;height:33.2px;background:linear-gradient(180deg,rgba(255,255,255,0.22) 0%,rgba(255,255,255,0.05) 55%,rgba(0,0,0,0.07) 100%);"></div>
<div class="a" style="left:66.8px;top:0;width:1.6px;height:33.2px;background:rgba(70,85,90,0.35);"></div>
<div class="a" style="left:252.6px;top:0;width:1.6px;height:33.2px;background:rgba(70,85,90,0.35);"></div>
<div class="a" style="left:438.6px;top:0;width:1.6px;height:33.2px;background:rgba(70,85,90,0.35);"></div>
<div class="a" style="left:624.6px;top:0;width:1.6px;height:33.2px;background:rgba(70,85,90,0.35);"></div>
<div class="a" style="left:808.8px;top:0;width:1.6px;height:33.2px;background:rgba(70,85,90,0.35);"></div>
<div class="a" style="left:994.8px;top:0;width:1.6px;height:33.2px;background:rgba(70,85,90,0.35);"></div>
<div class="a" style="left:1180.6px;top:0;width:1.6px;height:33.2px;background:rgba(70,85,90,0.35);"></div>
<div class="a" style="left:1366.4px;top:0;width:1.6px;height:33.2px;background:rgba(70,85,90,0.35);"></div>
<div class="a" style="left:1368px;top:0;width:184px;height:33.2px;background:linear-gradient(180deg,rgba(255,255,255,0.27),rgba(255,255,255,0.15));"></div>
<div class="a" style="left:1552px;top:0;width:184.6px;height:34px;background:#f2f4f5;"></div>
<div class="a" style="left:0;top:33.2px;width:2000px;height:44.4px;background:#e5ebee;"></div>
<div class="a" style="left:0;top:77.6px;width:2000px;height:37px;background:#e9eef0;border-bottom:2px solid #d9dee0;box-sizing:border-box;"></div>
<div class="a" style="left:0;top:77.6px;width:2000px;height:1.6px;background:#f0f4f5;"></div>
<div class="a" style="left:201px;top:39px;width:1597px;height:34px;background:#fff;"></div>
<svg style="left:7.2px;top:8.8px" width="17.2" height="16" viewBox="0 0 17 16"><rect x="1" y="1" width="11" height="9" fill="none" stroke="#2b2b2b" stroke-width="1.6"/><rect x="1" y="1" width="11" height="3" fill="#2b2b2b"/><rect x="5.5" y="6" width="11" height="9" fill="#dfe6e8" stroke="#2b2b2b" stroke-width="1.6"/><rect x="5.5" y="6" width="11" height="3" fill="#2b2b2b"/></svg>
<svg style="left:41.2px;top:10px" width="17.2" height="14" viewBox="0 0 17 14"><rect x="6" y="1" width="10" height="11" fill="none" stroke="#2b2b2b" stroke-width="1.6"/><rect x="6" y="1" width="10" height="3" fill="#2b2b2b"/><path d="M11 7.5 H1 M4 4.5 L1 7.5 L4 10.5" fill="none" stroke="#2b2b2b" stroke-width="1.5"/></svg>
<svg style="left:75.2px;top:10.2px" width="18" height="13.6" viewBox="0 0 18 14"><rect x="0" y="0" width="18" height="14" rx="1" fill="#f5f1f0"/><path d="M0 14 V1 L9 8 L18 1 V14 H15 V5.5 L9 10.5 L3 5.5 V14Z" fill="#e2373a"/><path d="M0 1 L1.5 0 H16.5 L18 1 L9 8Z" fill="none" stroke="#e2373a" stroke-width="1.2"/></svg>
<svg style="left:977.6px;top:90px" width="18" height="13.6" viewBox="0 0 18 14"><rect x="0" y="0" width="18" height="14" rx="1" fill="#f5f1f0"/><path d="M0 14 V1 L9 8 L18 1 V14 H15 V5.5 L9 10.5 L3 5.5 V14Z" fill="#e2373a"/><path d="M0 1 L1.5 0 H16.5 L18 1 L9 8Z" fill="none" stroke="#e2373a" stroke-width="1.2"/></svg>
<svg style="left:262.8px;top:9.2px" width="16.8" height="15.2" viewBox="0 0 17 15"><path d="M6 3 C8.500 2.200 11 2.400 13 3.200" fill="none" stroke="#7f93b8" stroke-width="1.500"/><path d="M1 7.300 H15.500" stroke="#d9535c" stroke-width="2"/><path d="M3.500 5 L1 7.300 L3.500 9.600" fill="none" stroke="#d9535c" stroke-width="1.200"/><path d="M4 11.600 C7 12.400 11 12.400 14 11.400" fill="none" stroke="#7f93b8" stroke-width="1.700"/></svg>
<svg style="left:447.6px;top:8.6px" width="16.8" height="16.8" viewBox="0 0 20 20"><path d="M10 1 A9 9 0 0 0 2.300 14.6 L1 19 L5.600 17.8 A9 9 0 1 0 10 1Z" fill="#2cb742"/><path d="M6.500 5.500 C5.500 6.500 5.600 8 6.600 9.600 C7.800 11.500 9.500 13.200 11.800 14 C13 14.400 14 14 14.600 13 L14.700 12 L12.600 11 L11.700 12 C10.300 11.500 8.800 10 8.200 8.600 L9.100 7.700 L8.100 5.500Z" fill="#fff"/></svg>
<div class="a" style="left:634px;top:9.4px;width:15.4px;height:15.4px;background:#3b5998;"></div>
<svg style="left:634px;top:9.4px" width="15.4" height="15.4" viewBox="0 0 16 16"><path d="M11 16 V10 H13 L13.400 7.600 H11 V6.200 C11 5.400 11.300 5 12.300 5 H13.500 V2.800 C13.200 2.800 12.500 2.700 11.600 2.700 C9.700 2.700 8.500 3.800 8.500 5.900 V7.600 H6.500 V10 H8.500 V16Z" fill="#fff"/></svg>
<svg style="left:819.2px;top:11px" width="16" height="12" viewBox="0 0 16 12"><rect width="16" height="12" rx="1.500" fill="#6b5fd6"/><path d="M1 2 L8 7 L15 2" fill="none" stroke="#fff" stroke-width="1.300"/></svg>
<svg style="left:1003.6px;top:8.6px" width="16.8" height="16.8" viewBox="0 0 20 20"><circle cx="10" cy="10" r="10" fill="#fff"/><path d="M10 4.200 A5.800 5.800 0 0 1 14.100 5.900 L12.600 7.400 A3.700 3.700 0 0 0 6.500 8.800 L4.700 7.400 A5.800 5.800 0 0 1 10 4.200Z" fill="#ea4335"/><path d="M4.700 7.400 L6.500 8.800 A3.700 3.700 0 0 0 6.500 11.200 L4.700 12.600 A5.800 5.800 0 0 1 4.700 7.400Z" fill="#fbbc05"/><path d="M4.700 12.600 L6.500 11.200 A3.700 3.700 0 0 0 12.200 13 L13.900 14.300 A5.800 5.800 0 0 1 4.700 12.600Z" fill="#34a853"/><path d="M10 9 H15.600 A5.800 5.800 0 0 1 13.900 14.300 L12.200 13 A3.700 3.700 0 0 0 13.500 11 H10Z" fill="#4285f4"/></svg>
<svg style="left:1189.6px;top:8.4px" width="16.8" height="17.6" viewBox="0 0 17 18"><path d="M2 3 L9 0.500 L16 3 V14 L9 17.500 L2 14Z" fill="#f5a623"/><path d="M2 3 L9 5.500 V17.500 L2 14Z" fill="#f26b3a"/><path d="M9 5.500 L16 3 V14 L9 17.500Z" fill="#f9c440"/></svg>
<svg style="left:1374.6px;top:8.4px" width="17.2" height="17.2" viewBox="0 0 32 32"><circle cx="16" cy="16" r="15" fill="#e9eef0"/><path d="M4 21 C6 11 12 7 17 7 C23 7 27 12 28 19 C27 27 20 31 14 30 C8 29 5 26 4 21Z" fill="#4a3f45"/><path d="M9 21 C9 15 12 12 16 12 C20 12 23 15 23 21 C23 27 19 30 16 30 C12 30 9 26 9 21Z" fill="#fff"/><path d="M19 17 L28 14 L29 26 L21 29Z" fill="#df0067"/><circle cx="13.500" cy="17.500" r="2.400" fill="#34262a"/><path d="M3 14 C6 6 14 2 22 5 C16 5 9 8 6 16Z" fill="#aeb4b8"/></svg>
<svg style="left:1559.6px;top:8.4px" width="17.2" height="17.2" viewBox="0 0 32 32"><circle cx="16" cy="16" r="15" fill="#e9eef0"/><path d="M4 21 C6 11 12 7 17 7 C23 7 27 12 28 19 C27 27 20 31 14 30 C8 29 5 26 4 21Z" fill="#4a3f45"/><path d="M9 21 C9 15 12 12 16 12 C20 12 23 15 23 21 C23 27 19 30 16 30 C12 30 9 26 9 21Z" fill="#fff"/><path d="M19 17 L28 14 L29 26 L21 29Z" fill="#df0067"/><circle cx="13.500" cy="17.500" r="2.400" fill="#34262a"/><path d="M3 14 C6 6 14 2 22 5 C16 5 9 8 6 16Z" fill="#aeb4b8"/></svg>
<svg style="left:1713.6px;top:10.6px" width="12.4" height="12.4" viewBox="0 0 10 10"><path d="M1 1 L9 9 M9 1 L1 9" stroke="#333" stroke-width="1.100" fill="none"/></svg>
<svg style="left:1747.6px;top:10px" width="14.4" height="14.4" viewBox="0 0 12 12"><path d="M6 0.500 V11.500 M0.500 6 H11.500" stroke="#222" stroke-width="1.200" fill="none"/></svg>
<svg style="left:1781.6px;top:13.6px" width="12.8" height="7.2" viewBox="0 0 12 7"><path d="M0.500 0.700 L6 6 L11.500 0.700" stroke="#444" stroke-width="1.100" fill="none"/></svg>
<div class="a" style="left:1875.2px;top:16.4px;width:10px;height:1.6px;background:#222;"></div>
<svg style="left:1922.6px;top:11.2px" width="11.6" height="11.6" viewBox="0 0 12 12"><rect x="0.800" y="3" width="8.200" height="8.200" fill="none" stroke="#222" stroke-width="1.500"/><path d="M3 3 V0.800 H11.200 V9 H9" fill="none" stroke="#222" stroke-width="1.500"/></svg>
<svg style="left:1970.4px;top:11px" width="11.6" height="11.6" viewBox="0 0 10 10"><path d="M0.500 0.500 L9.500 9.500 M9.500 0.500 L0.500 9.500" stroke="#222" stroke-width="1.300" fill="none"/></svg>
<svg style="left:14px;top:47.2px" width="19.2" height="16.8" viewBox="0 0 20 18"><path d="M19.500 9 H1.500 M9 1 L1.200 9 L9 17" fill="none" stroke="#b3b6b7" stroke-width="1.300"/></svg>
<svg style="left:60px;top:47.2px" width="19.2" height="16.8" viewBox="0 0 20 18"><path d="M0.500 9 H18.500 M11 1 L18.800 9 L11 17" fill="none" stroke="#b3b6b7" stroke-width="1.300"/></svg>
<svg style="left:104.4px;top:45.6px" width="20" height="20.8" viewBox="0 0 20 21"><path d="M13.300 3.400 A8 8 0 1 1 7.400 3.200" fill="none" stroke="#2c2c2c" stroke-width="1.500"/><path d="M13.600 0.200 L14 4.400 L9.800 4.600" fill="none" stroke="#2c2c2c" stroke-width="1.500"/></svg>
<svg style="left:150.4px;top:47.2px" width="19.6" height="17.6" viewBox="0 0 20 18"><path d="M1 9.500 L10 1.200 L19 9.500 M3.500 8 V17 H8 V11.500 H12 V17 H16.500 V8" fill="none" stroke="#2c2c2c" stroke-width="1.500"/></svg>
<svg style="left:215.6px;top:48.4px" width="15.2" height="15.2" viewBox="0 0 16 16"><circle cx="8" cy="8" r="7" fill="none" stroke="#555" stroke-width="1.100"/><rect x="7.300" y="7" width="1.400" height="4.800" fill="#555"/><rect x="7.300" y="4.200" width="1.400" height="1.500" fill="#555"/></svg>
<svg style="left:1732.8px;top:47px" width="21.6" height="18" viewBox="0 0 22 18"><path d="M11 2.500 V16.500 M11 2.500 C8 1 4 1 1 2 V16 C4 15 8 15 11 16.500 C14 15 18 15 21 16 V2 C18 1 14 1 11 2.500Z" fill="none" stroke="#c9cccd" stroke-width="1.400"/></svg>
<svg style="left:0;top:0" width="2000" height="120" viewBox="0 0 1000 60"><polygon points="888.20,23.50 889.38,26.67 892.77,26.82 890.12,28.92 891.02,32.18 888.20,30.32 885.38,32.18 886.28,28.92 883.63,26.82 887.02,26.67" fill="none" stroke="#222" stroke-width="0.8" stroke-linejoin="miter"/></svg>
<svg style="left:0;top:0" width="2000" height="120" viewBox="0 0 1000 60"><polygon points="918.80,23.70 919.84,26.47 922.79,26.60 920.48,28.45 921.27,31.30 918.80,29.66 916.33,31.30 917.12,28.45 914.81,26.60 917.76,26.47" fill="none" stroke="#222" stroke-width="0.8" stroke-linejoin="miter"/></svg>
<svg style="left:1841.2px;top:52.8px" width="10.4" height="10.8" viewBox="0 0 10.400 10.800"><rect x="0" y="0" width="10.400" height="10.800" fill="#e5ebee"/><path d="M1.600 1.400 H10.400 M1.600 5.400 H10.400 M1.600 9.400 H10.400" stroke="#222" stroke-width="1.500"/></svg>
<svg style="left:1872px;top:44px" width="28" height="24" viewBox="936 22 14 12"><path d="M938.600 32 C939.500 28 941.500 24.500 943 23.300 C944.200 22.600 944.800 23.600 944.200 25 C943.200 27.500 941.500 30 939.800 31.600 C941 30.500 942.600 29 943.600 29.600 C944.400 30.200 943.800 31.600 944.800 32 C945.800 32.300 946.600 31.500 947.600 30.800" fill="none" stroke="#222" stroke-width="0.75"/></svg>
<svg style="left:1919.6px;top:46.4px" width="20.8" height="19.2" viewBox="0 0 21 19"><path d="M4 8 H1.500 V17.500 H16.500 V13" fill="none" stroke="#222" stroke-width="1.400"/><path d="M5.500 13 C6 8 9 5.500 14 5.500 V1.800 L20 7 L14 12.200 V8.500 C10 8.500 7.500 9.500 5.500 13Z" fill="none" stroke="#222" stroke-width="1.300" stroke-linejoin="round"/></svg>
<div class="a" style="left:1967.6px;top:55.2px;width:2.4px;height:2.4px;background:#222;border-radius:1.2px;"></div>
<div class="a" style="left:1975.4px;top:55.2px;width:2.4px;height:2.4px;background:#222;border-radius:1.2px;"></div>
<div class="a" style="left:1983.2px;top:55.2px;width:2.4px;height:2.4px;background:#222;border-radius:1.2px;"></div>
<svg style="left:0;top:0" width="2000" height="120" viewBox="0 0 1000 60"><polygon points="120.60,45.10 121.46,47.41 123.93,47.52 122.00,49.05 122.66,51.43 120.60,50.07 118.54,51.43 119.20,49.05 117.27,47.52 119.74,47.41" fill="none" stroke="#4a4a4a" stroke-width="0.62" stroke-linejoin="miter"/></svg>
<svg style="left:0;top:0" width="2000" height="120" viewBox="0 0 1000 60"><polygon points="175.60,45.10 176.46,47.41 178.93,47.52 177.00,49.05 177.66,51.43 175.60,50.07 173.54,51.43 174.20,49.05 172.27,47.52 174.74,47.41" fill="none" stroke="#4a4a4a" stroke-width="0.62" stroke-linejoin="miter"/></svg>
<svg style="left:0;top:0" width="2000" height="120" viewBox="0 0 1000 60"><polygon points="528.00,45.10 528.86,47.41 531.33,47.52 529.40,49.05 530.06,51.43 528.00,50.07 525.94,51.43 526.60,49.05 524.67,47.52 527.14,47.41" fill="none" stroke="#4a4a4a" stroke-width="0.62" stroke-linejoin="miter"/></svg>
<svg style="left:0;top:0" width="2000" height="120" viewBox="0 0 1000 60"><polygon points="595.00,45.10 595.86,47.41 598.33,47.52 596.40,49.05 597.06,51.43 595.00,50.07 592.94,51.43 593.60,49.05 591.67,47.52 594.14,47.41" fill="none" stroke="#4a4a4a" stroke-width="0.62" stroke-linejoin="miter"/></svg>
<svg style="left:0;top:0" width="2000" height="120" viewBox="0 0 1000 60"><polygon points="740.00,45.10 740.86,47.41 743.33,47.52 741.40,49.05 742.06,51.43 740.00,50.07 737.94,51.43 738.60,49.05 736.67,47.52 739.14,47.41" fill="none" stroke="#4a4a4a" stroke-width="0.62" stroke-linejoin="miter"/></svg>
<svg style="left:8.8px;top:88.6px" width="16.8" height="16.8" viewBox="0 0 17 17"><circle cx="8.200" cy="9" r="7" fill="#cfe6ea"/><path d="M2.200 13.500 L10.500 3 L14 3 L12.800 13.500 L9.800 13.500 L10.200 10.800 L7 10.800 L5 13.500Z M8.600 8.800 L10.500 8.800 L11 5.600Z" fill="#27313a" fill-rule="evenodd"/></svg>
<svg style="left:88.4px;top:88.6px" width="15.2" height="16" viewBox="0 0 15 16"><path d="M1 2.500 C3 0.500 5 3.500 7 2" fill="none" stroke="#35b7cf" stroke-width="1.600"/><path d="M5.500 2.800 C7 1 9 3.500 10.500 2" fill="none" stroke="#4a63c8" stroke-width="1.600"/><path d="M9.500 1.500 L14 2.500 L11 4.200Z" fill="#e23b7c"/><rect x="1.500" y="6" width="12" height="2" fill="#7a2630"/><rect x="2" y="8.500" width="11" height="5.500" fill="#8c3038"/><path d="M4.500 8.500 V14 M7.500 8.500 V14 M10.500 8.500 V14" stroke="#f1e4e0" stroke-width="1"/><rect x="1" y="14" width="13" height="1.600" fill="#6a2028"/></svg>
<svg style="left:448.4px;top:88.2px" width="16.8" height="16.8" viewBox="0 0 20 20"><circle cx="10" cy="10" r="8" fill="none" stroke="#eec24f" stroke-width="3.200" stroke-dasharray="2.400 1.500"/><rect x="6" y="6.500" width="8" height="7" fill="#f7f4ea" stroke="#d8d8d8" stroke-width="0.8"/></svg>
<svg style="left:571px;top:88px" width="10" height="18" viewBox="0 0 10 18"><path d="M2 1 V13 M2 7 C5 4 8 6 7 9 C6 12 3 12 2 11 M3 14 C5 16 8 15 8 17" fill="none" stroke="#8e3aa6" stroke-width="1.500"/></svg>
<svg style="left:721.6px;top:88.2px" width="16.8" height="16.8" viewBox="0 0 20 20"><circle cx="10" cy="10" r="8.800" fill="#f4f4f4" stroke="#444" stroke-width="1.500"/><path d="M10 3 V17 M7 6 C9 8 11 8 13 6 M7 14 C9 12 11 12 13 14" stroke="#333" stroke-width="1.600" fill="none"/></svg>
<svg style="left:875.4px;top:88.2px" width="17.2" height="17.2" viewBox="0 0 20 20"><circle cx="10" cy="10" r="9.500" fill="#1c1c1c"/><circle cx="10" cy="10" r="4.200" fill="none" stroke="#fff" stroke-width="2"/></svg>
<svg style="left:1322.8px;top:88px" width="20.8" height="17.6" viewBox="0 0 24 20"><rect x="0.500" y="0.500" width="23" height="19" rx="2" fill="#fbf9fa"/><path d="M9.500 5.500 C9 9 8 13 6 15.500 M4.500 7.500 C7 3.500 15 2.500 18.500 6 C21.500 9.500 17 15.500 10 15.800 C7.500 15.800 5.500 15 4.500 13.500" fill="none" stroke="#a63a5e" stroke-width="1.300"/></svg>
<svg style="left:1395.8px;top:88px" width="18" height="18" viewBox="0 0 20 20"><circle cx="10" cy="10" r="9" fill="#4a55b8"/><circle cx="10" cy="10" r="6.300" fill="#dfe8fb"/><circle cx="10" cy="10" r="3.600" fill="#6fa8e8"/></svg>
<svg style="left:1582px;top:89.2px" width="18" height="15.2" viewBox="0 0 18 15"><rect width="18" height="15" fill="#d8232a"/><path d="M2 10 L5 5 L8 9 L11 4 L14 8 L16 6" fill="none" stroke="#fff" stroke-width="1.400"/></svg>
<svg style="left:1690px;top:93px" width="15.2" height="8" viewBox="0 0 16 8"><path d="M0.500 6.500 C4 6 5 1.500 8 2 C10 2.500 11 5 15.500 3" fill="none" stroke="#e9737c" stroke-width="1.600"/></svg>
<svg style="left:1970.8px;top:94px" width="13.2" height="7.2" viewBox="0 0 12 7"><path d="M0.500 0.700 L6 6 L11.500 0.700" stroke="#444" stroke-width="1.100" fill="none"/></svg>
<div class="a" style="left:0;top:1082px;width:2000px;height:42px;background:#060a0e;"></div>
<div class="a" style="left:50px;top:1082px;width:359px;height:42px;background:#f2f2f2;"></div>
<svg style="left:14px;top:1094px" width="18.4" height="18.4" viewBox="0 0 18 18"><path d="M0 2.600 L7.400 1.600 V8.500 H0Z M8.300 1.500 L18 0 V8.500 H8.300Z M0 9.400 H7.400 V16.300 L0 15.300Z M8.300 9.400 H18 V18 L8.300 16.500Z" fill="#fff"/></svg>
<svg style="left:59.4px;top:1092.8px" width="21.6" height="21.6" viewBox="0 0 18 18"><circle cx="9" cy="9" r="7.400" fill="none" stroke="#1a1a1a" stroke-width="2.200"/></svg>
<svg style="left:381.2px;top:1092.6px" width="10.4" height="20.8" viewBox="0 0 10 20"><rect x="3" y="1" width="4" height="10" rx="2" fill="none" stroke="#444" stroke-width="1.200"/><path d="M1 9 C1 15 9 15 9 9 M5 13.700 V18 M2.500 18 H7.500" fill="none" stroke="#444" stroke-width="1.200"/></svg>
<svg style="left:421.6px;top:1095.6px" width="22.4" height="15.6" viewBox="0 0 23 16"><rect x="4.500" y="1" width="14" height="14" rx="1" fill="none" stroke="#d8d8d8" stroke-width="1.400"/><path d="M2.200 3.500 H0.800 V12.500 H2.200 M20.800 3.500 H22.200 V12.500 H20.800" fill="none" stroke="#d8d8d8" stroke-width="1.400"/></svg>
<svg style="left:475px;top:1093.6px" width="22.4" height="19.2" viewBox="0 0 22 19"><path d="M1 2 H8 L10 4 H21 V17 H1Z" fill="#f7c948"/><rect x="1" y="6" width="20" height="11" fill="#fbe08a"/><rect x="4" y="11" width="14" height="6" fill="#4aa3e0"/><rect x="1" y="16" width="20" height="2" fill="#e8b23a"/></svg>
<div class="a" style="left:514px;top:1082px;width:48.8px;height:42px;background:#3a3f45;"></div>
<div class="a" style="left:514px;top:1121.2px;width:48.8px;height:2.8px;background:#8cc3f2;"></div>
<svg style="left:527.6px;top:1092px" width="22" height="22" viewBox="0 0 22 22"><path d="M2 10.500 C2.500 5 6.500 1.500 11.500 1.500 C17.500 1.500 20.500 6 20.500 11 V13.500 H8 C8.300 16.500 11 18 14 18 C16.500 18 18.500 17.300 20 16.500 V20 C18 21 16 21.500 13.500 21.500 C7.500 21.500 4 18 4 12.500 C4 9.500 5.500 7 8 5.500 C5.500 6 3.500 8 2 10.500Z M8.200 9.800 H15.300 C15.300 7.500 14 6 12 6 C10 6 8.500 7.500 8.200 9.800Z" fill="#1f8af2" stroke="#1f8af2" stroke-width="0.6"/></svg>
<svg style="left:1710.8px;top:1093.2px" width="17.6" height="18.4" viewBox="0 0 18 19"><circle cx="7" cy="6" r="3.200" fill="none" stroke="#fff" stroke-width="1.300"/><path d="M1 18 C1 12 4 10.500 7 10.500 C9 10.500 10.500 11 11.500 12" fill="none" stroke="#fff" stroke-width="1.300"/><circle cx="13.500" cy="3.500" r="2" fill="none" stroke="#fff" stroke-width="1.100"/><path d="M11.500 8.500 C12 6.800 15.500 6.800 16.500 8.500" fill="none" stroke="#fff" stroke-width="1.100"/></svg>
<svg style="left:1753.6px;top:1099.2px" width="12.8" height="7.2" viewBox="0 0 12 7"><path d="M0.500 6.300 L6 1 L11.500 6.300" stroke="#fff" stroke-width="1.200" fill="none"/></svg>
<svg style="left:1775.6px;top:1095.6px" width="16" height="14.8" viewBox="0 0 16 15"><path d="M4 0.500 L8 3 L4 5.500 L0 3Z M12 0.500 L16 3 L12 5.500 L8 3Z M4 5.500 L8 8 L4 10.500 L0 8Z M12 5.500 L16 8 L12 10.500 L8 8Z M4 11.300 L8 8.800 L12 11.300 L8 13.800Z" fill="#fff"/></svg>
<svg style="left:1801.6px;top:1094.6px" width="16.8" height="16.8" viewBox="0 0 16 16"><circle cx="8" cy="8" r="8" fill="#d8232a"/><path d="M3.500 11.500 V5 L5.500 4.500 L8 8 L10.500 4.500 L12.500 5 V11.500 H10.700 V7.600 L8 11 L5.300 7.600 V11.500Z" fill="#fff"/></svg>
<svg style="left:1826.8px;top:1094.6px" width="18.8" height="17.2" viewBox="0 0 19 17"><rect x="4.500" y="1" width="13" height="9.500" fill="none" stroke="#fff" stroke-width="1.300"/><path d="M8 13.500 H14 M11 10.500 V13.500" stroke="#fff" stroke-width="1.300"/><rect x="1" y="7" width="5" height="8.500" fill="#060a0e" stroke="#fff" stroke-width="1.200"/></svg>
<svg style="left:1853.2px;top:1094.6px" width="19.2" height="17.2" viewBox="0 0 19 17"><path d="M1 6 H4 L8 2 V15 L4 11 H1Z" fill="none" stroke="#fff" stroke-width="1.200"/><path d="M10.500 5.500 C12 7 12 10 10.500 11.500 M13 3.500 C15.500 6 15.500 11 13 13.500 M15.500 1.500 C19 5 19 12 15.500 15.500" fill="none" stroke="#fff" stroke-width="1.100"/></svg>
<svg style="left:1958.8px;top:1094px" width="18.8" height="18.8" viewBox="0 0 19 19"><path d="M1.500 2 H17.500 V13.500 H8 L4.500 17 V13.500 H1.500Z" fill="#fff"/><path d="M4.500 5.500 H14.500 M4.500 8 H14.500 M4.500 10.500 H11" stroke="#060a0e" stroke-width="1"/></svg>
<div class="a" style="left:1992.8px;top:1081px;width:1.2px;height:43px;background:#6a737d;"></div>
<span class="t" style="left:102px;top:8.5px;font-size:12.6px;line-height:16.38px;color:#2b2b2b;letter-spacing:0.43px;">Solución de transporte I</span>
<span class="t" style="left:289px;top:8.5px;font-size:12.6px;line-height:16.38px;color:#2b2b2b;letter-spacing:0.27px;">Mis preferencias | Boxta</span>
<span class="t" style="left:474px;top:8.5px;font-size:12.6px;line-height:16.38px;color:#2b2b2b;letter-spacing:0.56px;">WhatsApp</span>
<span class="t" style="left:659.2px;top:8.5px;font-size:12.6px;line-height:16.38px;color:#2b2b2b;letter-spacing:0.16px;">(3) Facebook</span>
<span class="t" style="left:844.8px;top:8.5px;font-size:12.6px;line-height:16.38px;color:#2b2b2b;letter-spacing:0.36px;">(39 n.º de no leídos) - a</span>
<span class="t" style="left:1030px;top:8.5px;font-size:12.6px;line-height:16.38px;color:#2b2b2b;letter-spacing:0.5px;">opiniones funcionamier</span>
<span class="t" style="left:1215.2px;top:8.5px;font-size:12.6px;line-height:16.38px;color:#2b2b2b;letter-spacing:0.32px;">Boxtal colabora con Pre</span>
<span class="t" style="left:1402px;top:8.5px;font-size:12.6px;line-height:16.38px;color:#2b2b2b;letter-spacing:0.19px;">‘Esperando la respuesta</span>
<span class="t" style="left:1586px;top:8.5px;font-size:12.6px;line-height:16.38px;color:#2b2b2b;letter-spacing:0.35px;">Transportistas &gt; Co</span>
<span class="t" style="left:242.8px;top:47.34px;font-size:14px;line-height:18.2px;color:#1a1a1a;letter-spacing:-0.3px;">manualidadesmundoarte.com</span>
<span class="t" style="left:420px;top:47.34px;font-size:14px;line-height:18.2px;color:#9c9c9c;letter-spacing:-0.19px;">/admin123/index.php?controller=AdminCarrierWizard&amp;token=9d3606d6e9ab0f4d28e8d4aa8a3dfe78&amp;id_carrier=48</span>
<span class="t" style="left:33.2px;top:89.3px;font-size:12.6px;line-height:16.38px;color:#222;letter-spacing:-0.09px;">Arenart</span>
<span class="t" style="left:112px;top:89.3px;font-size:12.6px;line-height:16.38px;color:#222;letter-spacing:-0.08px;">Artesanías Montejo</span>
<span class="t" style="left:257.2px;top:89.3px;font-size:12.6px;line-height:16.38px;color:#222;letter-spacing:-0.17px;">Scrapmoving</span>
<span class="t" style="left:368px;top:89.3px;font-size:12.6px;line-height:16.38px;color:#222;letter-spacing:-0.53px;">Decoman SL</span>
<span class="t" style="left:474px;top:89.3px;font-size:12.6px;line-height:16.38px;color:#222;letter-spacing:0.02px;">Dekora Import</span>
<span class="t" style="left:592.8px;top:89.3px;font-size:12.6px;line-height:16.38px;color:#222;letter-spacing:-0.19px;">Luis Guarda - Arts &amp; ·</span>
<span class="t" style="left:747.2px;top:89.3px;font-size:12.6px;line-height:16.38px;color:#222;letter-spacing:-0.01px;">Flip flap ... ;flop book</span>
<span class="t" style="left:901.2px;top:89.3px;font-size:12.6px;line-height:16.38px;color:#222;letter-spacing:-0.22px;">Craftersb2b</span>
<span class="t" style="left:1003.2px;top:89.3px;font-size:12.6px;line-height:16.38px;color:#222;letter-spacing:-0.52px;">Gmail</span>
<span class="t" style="left:1073.2px;top:89.3px;font-size:12.6px;line-height:16.38px;color:#222;transform:scaleX(0.8555);transform-origin:0 50%;">PAPERS FOR YOU</span>
<span class="t" style="left:1207.2px;top:89.3px;font-size:12.6px;line-height:16.38px;color:#222;letter-spacing:-0.1px;">Craft &amp; You Design</span>
<span class="t" style="left:1350px;top:89.3px;font-size:12.6px;line-height:16.38px;color:#222;transform:scaleX(0.9299);transform-origin:0 50%;">Dayka</span>
<span class="t" style="left:1422px;top:89.3px;font-size:12.6px;line-height:16.38px;color:#222;transform:scaleX(0.8854);transform-origin:0 50%;">Poessa</span>
<span class="t" style="left:1496.8px;top:89.3px;font-size:12.6px;line-height:16.38px;color:#222;letter-spacing:0.27px;">Modelimport</span>
<span class="t" style="left:1607.2px;top:89.3px;font-size:12.6px;line-height:16.38px;color:#222;letter-spacing:0.02px;">Artemiranda</span>
<span class="t" style="left:1714px;top:89.3px;font-size:12.6px;line-height:16.38px;color:#222;letter-spacing:-0.3px;">MYBA. Manualidades</span>
<span class="t" style="left:53.6px;top:116.68px;font-size:24.8px;line-height:32.24px;color:#3d2a6d;font-weight:700;letter-spacing:-0.81px;">Presta</span>
<span class="t" style="left:125.4px;top:116.68px;font-size:24.8px;line-height:32.24px;color:#e5127d;font-weight:700;transform:scaleX(0.9002);transform-origin:0 50%;">Shop</span>
<span class="t" style="left:240px;top:122.62px;font-size:16.2px;line-height:21.06px;color:#363a41;letter-spacing:-0.13px;">Acceso rápido</span>
<span class="t" style="left:422px;top:126.1px;font-size:12.6px;line-height:16.38px;color:#a9b1b6;letter-spacing:0.56px;">Buscar</span>
<span class="t" style="left:1571.4px;top:122.82px;font-size:16.2px;line-height:21.06px;color:#27acea;letter-spacing:0.39px;">Modo mantenimiento</span>
<span class="t" style="left:1745px;top:122.82px;font-size:16.2px;line-height:21.06px;color:#4a4f57;letter-spacing:0.45px;">Mundoarte</span>
<span class="t" style="left:240px;top:158.7px;font-size:12.6px;line-height:16.38px;color:#9ca7ae;letter-spacing:0.35px;">Transporte</span>
<span class="t" style="left:311.6px;top:158.7px;font-size:12.6px;line-height:16.38px;color:#8fae7c;letter-spacing:0.9px;">/</span>
<span class="t" style="left:328.6px;top:158.7px;font-size:12.6px;line-height:16.38px;color:#363a41;letter-spacing:0.31px;">Transportistas</span>
<span class="t" style="left:240px;top:181.72px;font-size:28.8px;line-height:37.44px;color:#363a41;letter-spacing:-0.07px;">Correos</span>
<span class="t" style="left:1867.5px;top:214.7px;font-size:12.6px;line-height:16.38px;color:#555;letter-spacing:-0.2px;">Cancelar</span>
<span class="t" style="left:1934px;top:214.7px;font-size:12.6px;line-height:16.38px;color:#555;letter-spacing:-0.12px;">Ayuda</span>
<span class="t" style="left:20px;top:175.62px;font-size:13px;line-height:16.9px;color:#c9cdd2;letter-spacing:0.09px;">Inicio</span>
<span class="t" style="left:20px;top:249.04px;font-size:13px;line-height:16.9px;color:#c9cdd2;letter-spacing:-0.16px;">Pedidos</span>
<span class="t" style="left:20px;top:279.04px;font-size:13px;line-height:16.9px;color:#c9cdd2;letter-spacing:-0.01px;">Catálogo</span>
<span class="t" style="left:20px;top:308.64px;font-size:13px;line-height:16.9px;color:#c9cdd2;letter-spacing:0.15px;">Clientes</span>
<span class="t" style="left:20px;top:337.64px;font-size:13px;line-height:16.9px;color:#c9cdd2;letter-spacing:-0.06px;">Servicio al cliente</span>
<span class="t" style="left:20px;top:367.24px;font-size:13px;line-height:16.9px;color:#c9cdd2;letter-spacing:-0.28px;">Estadísticas</span>
<span class="t" style="left:20px;top:441.64px;font-size:13px;line-height:16.9px;color:#c9cdd2;letter-spacing:0.14px;">Módulos</span>
<span class="t" style="left:20px;top:470.64px;font-size:13px;line-height:16.9px;color:#c9cdd2;letter-spacing:-0.09px;">Diseño</span>
<span class="t" style="left:20px;top:500.24px;font-size:13px;line-height:16.9px;color:#c9cdd2;letter-spacing:0.18px;">Transporte</span>
<span class="t" style="left:20px;top:529.02px;font-size:13px;line-height:16.9px;color:#c9cdd2;letter-spacing:-0.46px;">Pago</span>
<span class="t" style="left:20px;top:558.62px;font-size:13px;line-height:16.9px;color:#c9cdd2;letter-spacing:0.13px;">Internacional</span>
<span class="t" style="left:20px;top:633.02px;font-size:13px;line-height:16.9px;color:#c9cdd2;letter-spacing:0.09px;">Parámetros de la tienda</span>
<span class="t" style="left:20px;top:662.02px;font-size:13px;line-height:16.9px;color:#c9cdd2;letter-spacing:-0.01px;">Parámetros Avanzados</span>
<span class="t" style="left:20px;top:737.62px;font-size:13px;line-height:16.9px;color:#c9cdd2;letter-spacing:-0.16px;">1-Click Upgrade</span>
<span class="t" style="left:10px;top:217.3px;font-size:12.6px;line-height:16.38px;color:#eef3f5;font-weight:700;letter-spacing:-0.23px;">VENTAS</span>
<span class="t" style="left:10px;top:408.7px;font-size:12.6px;line-height:16.38px;color:#eef3f5;font-weight:700;transform:scaleX(0.9152);transform-origin:0 50%;">MEJORAS</span>
<span class="t" style="left:10px;top:599.9px;font-size:12.6px;line-height:16.38px;color:#eef3f5;font-weight:700;letter-spacing:-0.06px;">CONFIGURACIÓN</span>
<span class="t" style="left:10px;top:703.5px;font-size:12.6px;line-height:16.38px;color:#eef3f5;font-weight:700;letter-spacing:0px;">MÁS</span>
<span class="t" style="left:10px;top:974.08px;font-size:11.2px;line-height:14.56px;color:#c9cdd2;letter-spacing:0.23px;">¡Lanza tu tienda!</span>
<span class="t" style="left:186px;top:974.08px;font-size:11.2px;line-height:14.56px;color:#c9cdd2;letter-spacing:-0.2px;">36%</span>
<span class="t" style="left:86px;top:1033.62px;font-size:10.4px;line-height:13.52px;color:#9aa2a9;transform:scaleX(0.9236);transform-origin:0 50%;">RESUMEN</span>
<span class="t" style="left:30px;top:1064.82px;font-size:10.4px;line-height:13.52px;color:#c9cdd2;letter-spacing:0.32px;">Detener módulo Primeros pasos</span>
<span class="t" style="left:1627.2px;top:984.32px;font-size:20.4px;line-height:26.52px;color:rgba(130,130,130,0.44);letter-spacing:0.15px;">Activar Windows</span>
<span class="t" style="left:1627.2px;top:1012.88px;font-size:13.8px;line-height:17.94px;color:rgba(130,130,130,0.44);letter-spacing:0.76px;">Ve a Configuración para activar Windows.</span>
<span class="t" style="left:91.2px;top:1093.64px;font-size:15.6px;line-height:20.28px;color:#333;letter-spacing:-0.2px;">Escribe aquí para buscar</span>
<span class="t" style="left:1894.4px;top:1086.26px;font-size:11.8px;line-height:15.34px;color:#fff;letter-spacing:-0.38px;">13:12</span>
<span class="t" style="left:1878.8px;top:1105.46px;font-size:11.8px;line-height:15.34px;color:#fff;letter-spacing:0.06px;">14/02/2018</span>
</div>
</body></html>
